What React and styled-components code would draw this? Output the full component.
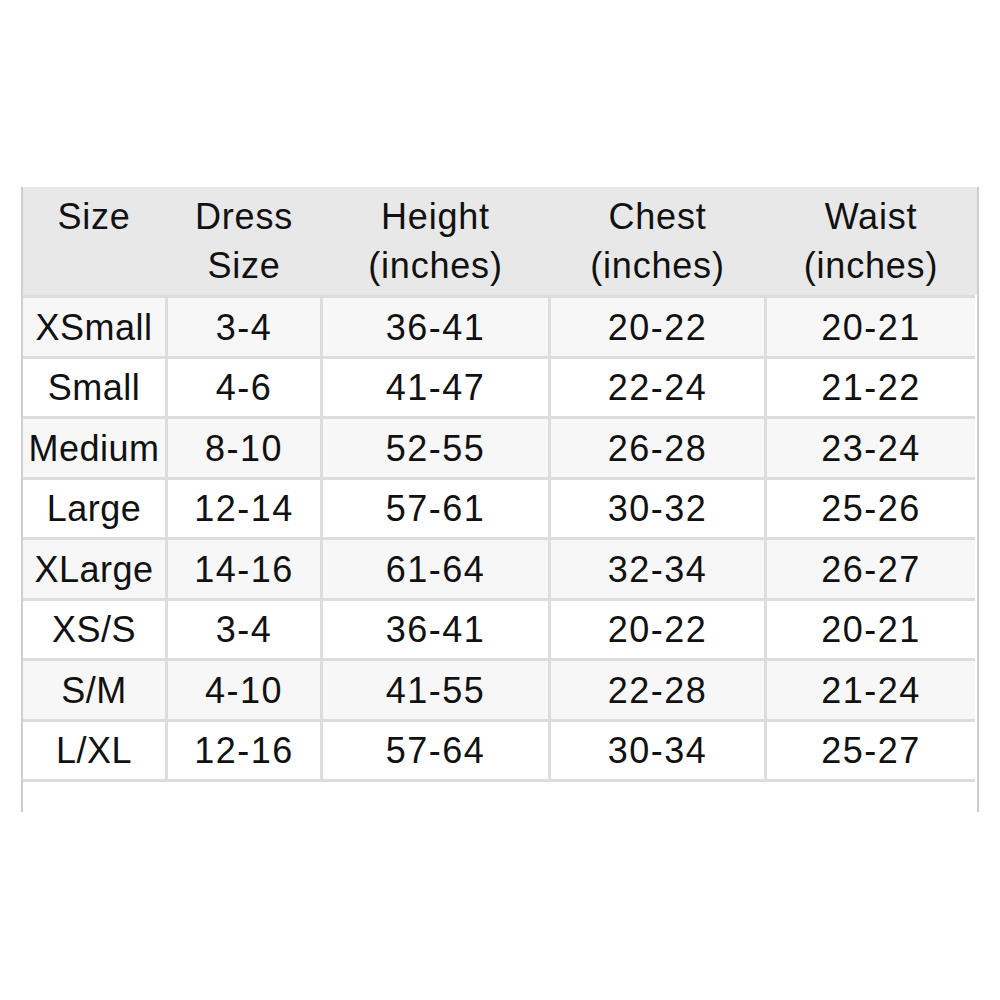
import React from "react"
import styled, { createGlobalStyle } from "styled-components"

const GlobalStyle = createGlobalStyle`
  body {
    margin: 0;
    background: #ffffff;
    font-family: "Liberation Sans", Arial, sans-serif;
    color: #111111;
  }
`

const columns = "142px 152px 225px 213px 208px"

const headers = [
  ["Size"],
  ["Dress", "Size"],
  ["Height", "(inches)"],
  ["Chest", "(inches)"],
  ["Waist", "(inches)"],
]

const rows = [
  ["XSmall", "3-4", "36-41", "20-22", "20-21"],
  ["Small", "4-6", "41-47", "22-24", "21-22"],
  ["Medium", "8-10", "52-55", "26-28", "23-24"],
  ["Large", "12-14", "57-61", "30-32", "25-26"],
  ["XLarge", "14-16", "61-64", "32-34", "26-27"],
  ["XS/S", "3-4", "36-41", "20-22", "20-21"],
  ["S/M", "4-10", "41-55", "22-28", "21-24"],
  ["L/XL", "12-16", "57-64", "30-34", "25-27"],
]

const Page = styled.div`
  padding: 187px 0 0 21px;
`

const Frame = styled.div`
  width: 958px;
  height: 625px;
  box-sizing: border-box;
  border-left: 2px solid #cfcfcf;
  border-right: 2px solid #cfcfcf;
`

const HeaderRow = styled.div`
  display: grid;
  grid-template-columns: ${columns};
  column-gap: 3px;
  height: 108px;
  box-sizing: border-box;
  padding-top: 5px;
  background: #e8e8e8;
`

const HeadCell = styled.div`
  font-size: 36px;
  line-height: 49px;
  letter-spacing: 0.8px;
  text-align: center;
`

const Body = styled.div`
  display: grid;
  grid-template-columns: ${columns};
  grid-auto-rows: 57.5px;
  gap: 3px;
  padding: 3px 0;
  margin-right: 2px;
  background: #dddddd;
`

const Cell = styled.div`
  display: flex;
  align-items: center;
  justify-content: center;
  font-size: 36px;
  letter-spacing: ${(p) => (p.$numeric ? "1.5px" : "0.5px")};
  padding-top: 2px;
  box-sizing: border-box;
  background: ${(p) => (p.$shaded ? "#f7f7f7" : "#ffffff")};
`

export default function App() {
  return <Page>
    <GlobalStyle />
    <Frame>
      <HeaderRow>
        {headers.map((lines, i) => <HeadCell key={i}>
          {lines.map((l, j) => <div key={j}>{l}</div>)}
        </HeadCell>)}
      </HeaderRow>
      <Body>
        {rows.map((row, r) => row.map((v, c) =>
          <Cell key={r + "-" + c} $shaded={r % 2 === 0} $numeric={c > 0}>{v}</Cell>
        ))}
      </Body>
    </Frame>
  </Page>
}
